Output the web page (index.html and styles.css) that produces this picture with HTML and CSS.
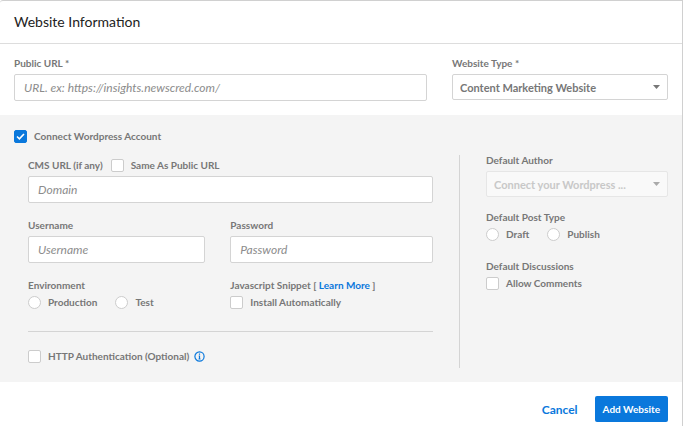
FILE: index.html
```html
<!DOCTYPE html>
<html lang="en">
<head>
    <meta charset="UTF-8">
    <title>Website Information</title>
    <link rel="stylesheet" href="styles.css">
</head>
<body>
    <form class="modal">
        <header class="modal-header">
            <h1>Website Information</h1>
        </header>

        <section class="site">
            <div class="field">
                <label class="title" for="public-url">Public URL *</label>
                <input type="text" class="text-input" id="public-url" placeholder="URL. ex: https://insights.newscred.com/">
            </div>
            <div class="field">
                <label class="title" for="website-type">Website Type *</label>
                <select class="select" id="website-type">
                    <option>Content Marketing Website</option>
                </select>
            </div>
        </section>

        <section class="wordpress">
            <label class="option"><input type="checkbox" checked>Connect Wordpress Account</label>

            <div class="columns">
                <div class="account">
                    <div class="field">
                        <div class="title-row">
                            <label class="title" for="cms-url">CMS URL (if any)</label>
                            <label class="option"><input type="checkbox">Same As Public URL</label>
                        </div>
                        <input type="text" class="text-input" id="cms-url" placeholder="Domain">
                    </div>

                    <div class="pair">
                        <div class="field">
                            <label class="title" for="username">Username</label>
                            <input type="text" class="text-input" id="username" placeholder="Username">
                        </div>
                        <div class="field">
                            <label class="title" for="password">Password</label>
                            <input type="password" class="text-input" id="password" placeholder="Password">
                        </div>
                    </div>

                    <div class="pair">
                        <div class="group" role="radiogroup" aria-labelledby="environment">
                            <span class="title" id="environment">Environment</span>
                            <div class="options">
                                <label class="option"><input type="radio" name="environment">Production</label>
                                <label class="option"><input type="radio" name="environment">Test</label>
                            </div>
                        </div>
                        <div class="group">
                            <span class="title">Javascript Snippet [ <a href="#">Learn More</a> ]</span>
                            <label class="option"><input type="checkbox">Install Automatically</label>
                        </div>
                    </div>

                    <div class="http-auth">
                        <label class="option"><input type="checkbox">HTTP Authentication (Optional)</label>
                        <svg class="info" viewBox="0 0 11 11" aria-hidden="true">
                            <circle cx="5.5" cy="5.5" r="4.6"/>
                            <path d="M5.5 2.5v1.3M4.7 5h.8v3M4.5 8h2"/>
                        </svg>
                    </div>
                </div>

                <div class="divider"></div>

                <div class="defaults">
                    <div class="field">
                        <label class="title" for="author">Default Author</label>
                        <select class="select" id="author" disabled>
                            <option>Connect your Wordpress ...</option>
                        </select>
                    </div>
                    <div class="group" role="radiogroup" aria-labelledby="post-type">
                        <span class="title" id="post-type">Default Post Type</span>
                        <div class="options">
                            <label class="option"><input type="radio" name="post-type">Draft</label>
                            <label class="option"><input type="radio" name="post-type">Publish</label>
                        </div>
                    </div>
                    <div class="group">
                        <span class="title">Default Discussions</span>
                        <label class="option"><input type="checkbox">Allow Comments</label>
                    </div>
                </div>
            </div>
        </section>

        <footer class="modal-footer">
            <button type="button" class="cancel">Cancel</button>
            <button type="submit" class="submit">Add Website</button>
        </footer>
    </form>
</body>
</html>
```
FILE: styles.css
```css
* {
    box-sizing: border-box;
}

body {
    margin: 0;
    font-family: Lato, "Open Sans", sans-serif;
    font-size: 10px;
    line-height: 16px;
    color: #777;
    background-color: #fff;
}

input, select, button {
    font-family: inherit;
    margin: 0;
}

a {
    color: #0a78dc;
    text-decoration: none;
}

.modal {
    border-top: 1px solid #d0d0d0;
    border-right: 1px solid #d0d0d0;
    border-radius: 3px 0 0 0;
}

.modal-header {
    padding: 11px 14px;
    border-bottom: 1px solid #ddd;
}

.modal-header h1 {
    margin: 0;
    font-size: 14px;
    line-height: 20px;
    font-weight: 400;
    color: #222;
}

.site {
    display: grid;
    grid-template-columns: 1fr 216px;
    gap: 25px;
    padding: 11px 14px 14px;
}

.field {
    display: flex;
    flex-direction: column;
    gap: 3px;
}

.title, .option {
    font-weight: 700;
}

.title-row {
    display: flex;
    gap: 8px;
}

.text-input {
    width: 100%;
    height: 27px;
    padding: 0 9px;
    border: 1px solid #d4d4d4;
    border-radius: 2px;
    background-color: #fff;
    font-size: 12px;
    color: #555;
}

.text-input::placeholder {
    color: #8c8c8c;
    font-style: italic;
    opacity: 1;
}

.select {
    appearance: none;
    width: 100%;
    height: 26px;
    padding: 0 24px 0 7px;
    border: 1px solid #d4d4d4;
    border-radius: 2px;
    background: #fff url("data:image/svg+xml,%3Csvg xmlns='http://www.w3.org/2000/svg' viewBox='0 0 7 4'%3E%3Cpath d='M0 0h7L3.5 4z' fill='%23777'/%3E%3C/svg%3E") no-repeat right 7px center / 7px 4px;
    font-size: 11px;
    font-weight: 700;
    color: #777;
}

.select:disabled {
    background-color: #f9f9f9;
    background-image: url("data:image/svg+xml,%3Csvg xmlns='http://www.w3.org/2000/svg' viewBox='0 0 7 4'%3E%3Cpath d='M0 0h7L3.5 4z' fill='%23aaa'/%3E%3C/svg%3E");
    border-color: #e6e6e6;
    color: #c8c8c8;
    opacity: 1;
}

.wordpress {
    padding: 13px 14px 14px;
    background-color: #f4f4f4;
}

.option {
    display: flex;
    align-items: center;
    gap: 7px;
    white-space: nowrap;
}

.option input {
    appearance: none;
    flex: none;
    width: 13px;
    height: 13px;
    border: 1px solid #ccc;
    border-radius: 2px;
    background-color: #fff;
}

.option input[type="radio"] {
    border-radius: 50%;
}

.option input:checked {
    border-color: #0a78dc;
    background: #0a78dc url("data:image/svg+xml,%3Csvg xmlns='http://www.w3.org/2000/svg' viewBox='0 0 9 7'%3E%3Cpath d='M1 3.5l2.4 2.3L8 1' fill='none' stroke='white' stroke-width='1.6'/%3E%3C/svg%3E") no-repeat center / 9px 7px;
}

.columns {
    display: grid;
    grid-template-columns: 1fr 1px 182px;
    gap: 26px;
    margin-top: 8px;
    padding-left: 14px;
}

.account {
    padding: 5px 0 4px;
}

.pair {
    display: grid;
    grid-template-columns: 7fr 8fr;
    gap: 25px;
    margin-top: 14px;
}

.group {
    display: flex;
    flex-direction: column;
    gap: 1px;
}

.options {
    display: flex;
    gap: 18px;
}

.http-auth {
    display: flex;
    align-items: center;
    gap: 5px;
    margin-top: 21px;
    padding-top: 16px;
    border-top: 1px solid #d4d4d4;
}

.info {
    width: 11px;
    height: 11px;
    fill: none;
    stroke: #0a78dc;
    stroke-width: 1.2;
}

.divider {
    margin-top: 3px;
    background-color: #d4d4d4;
}

.defaults {
    display: flex;
    flex-direction: column;
    gap: 16px;
}

.defaults .field {
    margin-bottom: -4px;
}

.modal-footer {
    display: flex;
    justify-content: flex-end;
    align-items: center;
    gap: 17px;
    padding: 14px 14px 4px;
}

.modal-footer button {
    border: none;
    font-weight: 700;
    cursor: pointer;
}

.cancel {
    padding: 0;
    background: none;
    font-size: 12px;
    color: #0a78dc;
}

.submit {
    height: 26px;
    padding: 0 8px;
    border-radius: 2px;
    background-color: #0a78dc;
    font-size: 10px;
    color: #fff;
}
```
